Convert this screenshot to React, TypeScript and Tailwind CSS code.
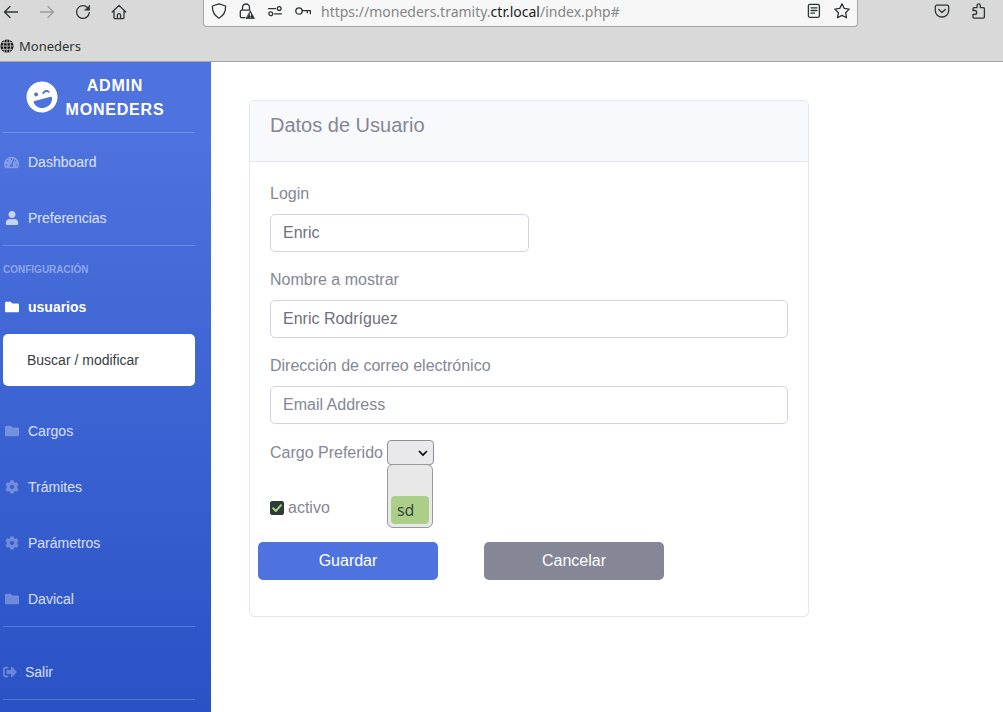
import React from "react";
import {
  FaCog,
  FaFolder,
  FaLaughWink,
  FaSignOutAlt,
  FaTachometerAlt,
  FaUser,
} from "react-icons/fa";

type GlyphProps = { children: React.ReactNode; className?: string };

function Glyph({ children, className = "text-[#2e3436]" }: GlyphProps) {
  return (
    <svg
      viewBox="0 0 16 16"
      className={`size-4 shrink-0 ${className}`}
      fill="none"
      stroke="currentColor"
      strokeWidth="1.3"
      strokeLinecap="round"
      strokeLinejoin="round"
      aria-hidden="true"
    >
      {children}
    </svg>
  );
}

function BrowserChrome() {
  return (
    <header className="flex h-[62px] flex-col border-b border-[#a6a6a6] bg-[#d9d9d9] font-['Noto_Sans',sans-serif]">
      <div className="flex h-[27px] items-start">
        <div className="flex w-[203px] shrink-0 gap-5 pt-1 pl-[3px]">
          <button aria-label="Atrás">
            <Glyph>
              <path d="M14.5 8H1.5M7 2.5 1.5 8 7 13.5" />
            </Glyph>
          </button>
          <button aria-label="Adelante">
            <Glyph className="text-[#9c9c9c]">
              <path d="M1.5 8h13M9 2.5 14.5 8 9 13.5" />
            </Glyph>
          </button>
          <button aria-label="Recargar">
            <Glyph>
              <path d="M14.3 8.6A6.4 6.4 0 1 1 12.6 3.6" />
              <path d="M14.6 1.4v4.8H9.8z" fill="currentColor" strokeWidth="0.6" />
            </Glyph>
          </button>
          <button aria-label="Inicio">
            <Glyph>
              <path d="M1.2 8 8 1.4 14.8 8M3 6.6v7.2c0 .5.3.8.8.8h8.4c.5 0 .8-.3.8-.8V6.600M6.400 14.400v-3.200a1.600 1.600 0 0 1 3.200 0v3.200" />
            </Glyph>
          </button>
        </div>
        <div className="flex h-[27px] flex-1 items-start rounded-b-sm border border-t-0 border-[#a6a6a6] bg-[#f7f7f7] px-[7px] pt-[3px]">
          <div className="flex w-[110px] shrink-0 gap-3">
            <Glyph>
              <path d="M8 .8 14.600 3c.2 5.200-1.300 9.200-6.600 12.200C2.700 12.200 1.200 8.200 1.400 3z" />
            </Glyph>
            <Glyph>
              <path d="M3.500 7.200V4.500a3.500 3.500 0 0 1 7 0v2.700M6 14.600H2.800c-.9 0-1.500-.6-1.500-1.500V8.700c0-.9.6-1.500 1.500-1.500h8" />
              <path d="M11.400 8.200 15.400 15.600H7.400z" fill="currentColor" strokeWidth="0.8" />
              <path d="M11.400 10.500v2.200M11.400 14.200v.1" stroke="#f7f7f7" strokeWidth="1" />
            </Glyph>
            <Glyph>
              <path d="M1.500 5.600h7M7.500 10.800h7" />
              <circle cx="12.200" cy="5.600" r="1.900" />
              <circle cx="3.800" cy="10.800" r="1.900" />
            </Glyph>
            <Glyph>
              <circle cx="4" cy="8" r="3.200" />
              <path d="M7.200 7.600h8.200v3M12.300 7.600v2.200" />
            </Glyph>
          </div>
          <div className="flex-1 text-sm leading-[18px] text-[#858585]">
            https://moneders.tramity.<span className="text-[#222]">ctr.local</span>/index.php#
          </div>
          <div className="flex gap-3">
            <button aria-label="Vista de lectura">
              <Glyph>
                <rect x="2.400" y="1.300" width="11" height="13" rx="1.600" />
                <path d="M5 4.800h6M5 7.500h6M5 10.200h3.500" />
              </Glyph>
            </button>
            <button aria-label="Marcador">
              <Glyph>
                <path d="m8 .8 2.200 4.600 5 .7-3.600 3.600.9 5.100L8 12.400l-4.500 2.400.9-5.100L.8 6.100l5-.7z" />
              </Glyph>
            </button>
          </div>
        </div>
        <div className="flex w-[145px] shrink-0 justify-end gap-5 pt-[3px] pr-[17px]">
          <button aria-label="Pocket">
            <Glyph>
              <path d="M2.800 2.200h10.400c.9 0 1.500.6 1.500 1.500v4.100a6.700 6.200 0 0 1-13.400 0V3.700c0-.9.6-1.500 1.500-1.500zM4.800 6.500l3.200 3 3.200-3" />
            </Glyph>
          </button>
          <button aria-label="Extensiones">
            <Glyph>
              <path d="M3 7.500V5.700c0-.7.400-1.100 1.100-1.100h3V2.400a1.600 1.600 0 0 1 3.200 0v2.200h3c.7 0 1.100.4 1.100 1.100v8.300c0 .7-.4 1.100-1.100 1.100H4.100c-.7 0-1.100-.4-1.100-1.100v-2.700h1.800a1.900 1.900 0 0 0 0-3.800z" />
            </Glyph>
          </button>
        </div>
      </div>
      <nav className="flex flex-1 items-center">
        <a href="#" className="flex items-center gap-[5px] pt-1 text-[13px] leading-5 text-[#2e3436]">
          <svg viewBox="0 0 14 14" className="size-3.5" aria-hidden="true">
            <circle cx="7" cy="7" r="6.600" fill="#111" />
            <path
              d="M7 .5v13M.5 7h13M1.500 3.700h11M1.500 10.300h11M4.500 1Q2 7 4.500 13M9.500 1Q12 7 9.500 13"
              fill="none"
              stroke="#d9d9d9"
              strokeWidth="0.8"
            />
          </svg>
          Moneders
        </a>
      </nav>
    </header>
  );
}

type NavItemProps = {
  icon: React.ReactNode;
  label: string;
  active?: boolean;
};

function NavItem({ icon, label, active }: NavItemProps) {
  return (
    <a
      href="#"
      className={`flex h-14 items-center gap-2 pt-0.5 text-sm ${
        active ? "font-bold text-white" : "text-white/80"
      }`}
    >
      <span className="flex w-[17px] justify-center">{icon}</span>
      {label}
    </a>
  );
}

const Divider = () => <hr className="border-white/20" />;

function Sidebar() {
  return (
    <aside className="w-[211px] shrink-0 bg-linear-to-b from-[#4e73df] from-10% to-[#2a52c5] pr-4 pl-[3px]">
      <a
        href="#"
        className="flex h-[70px] items-center justify-center gap-2 pr-2 text-center text-base leading-6 font-bold tracking-wider text-white uppercase"
      >
        <FaLaughWink className="size-8 shrink-0 -rotate-15" />
        <span className="pt-0.5">
          Admin
          <br />
          Moneders
        </span>
      </a>
      <Divider />
      <NavItem icon={<FaTachometerAlt className="size-[15px] text-white/30" />} label="Dashboard" />
      <NavItem icon={<FaUser className="size-3.5 text-white/70" />} label="Preferencias" />
      <Divider />
      <h2 className="pt-4 text-[10px] leading-4 font-bold text-white/40 uppercase">Configuración</h2>
      <NavItem icon={<FaFolder className="size-3.5" />} label="usuarios" active />
      <div className="mb-4 rounded-[5px] bg-white px-6 py-4">
        <a href="#" className="block text-sm text-[#3a3b45]">
          Buscar / modificar
        </a>
      </div>
      <NavItem icon={<FaFolder className="size-3.5 text-white/30" />} label="Cargos" />
      <NavItem icon={<FaCog className="size-3.5 text-white/30" />} label="Trámites" />
      <NavItem icon={<FaCog className="size-3.5 text-white/30" />} label="Parámetros" />
      <NavItem icon={<FaFolder className="size-3.5 text-white/30" />} label="Davical" />
      <Divider />
      <a href="#" className="mt-4 flex h-14 items-center gap-2 pt-0.5 text-sm text-white/80">
        <FaSignOutAlt className="size-3.5 text-white/30" />
        Salir
      </a>
      <Divider />
    </aside>
  );
}

type FieldProps = {
  id: string;
  label: string;
  value?: string;
  placeholder?: string;
  width?: string;
  type?: string;
};

function Field({ id, label, value, placeholder, width = "w-full", type = "text" }: FieldProps) {
  return (
    <div className="mb-4">
      <label htmlFor={id} className="mb-2 block">
        {label}
      </label>
      <input
        id={id}
        type={type}
        defaultValue={value}
        placeholder={placeholder}
        className={`block h-[38px] rounded-[5px] border border-[#d1d3e2] bg-white px-3 text-[#6e707e] placeholder:text-[#858796] ${width}`}
      />
    </div>
  );
}

function UserForm() {
  return (
    <section className="max-w-[560px] rounded-[5px] border border-[#e3e6f0] bg-white">
      <div className="rounded-t-[5px] border-b border-[#e3e6f0] bg-[#f8f9fc] px-5 pt-3 pb-6">
        <h1 className="text-xl leading-6">Datos de Usuario</h1>
      </div>
      <form className="px-5 pt-5 pb-9">
        <Field id="login" label="Login" value="Enric" width="w-1/2" />
        <Field id="nombre" label="Nombre a mostrar" value="Enric Rodríguez" />
        <Field
          id="email"
          type="email"
          label="Dirección de correo electrónico"
          placeholder="Email Address"
        />
        <div className="mb-[31px] flex items-center gap-1">
          <label htmlFor="cargo">Cargo Preferido</label>
          <div className="relative grid items-center">
            <select
              id="cargo"
              className="col-start-1 row-start-1 h-[25px] w-[47px] appearance-none rounded-[4px] border border-[#8f8f9d] bg-[#e9e9ed] text-black"
            >
              <option value=""></option>
              <option value="sd">sd</option>
            </select>
            <svg
              viewBox="0 0 10 10"
              className="pointer-events-none col-start-1 row-start-1 mr-1.5 size-2.5 justify-self-end"
              fill="none"
              stroke="#000"
              strokeWidth="1.600"
              aria-hidden="true"
            >
              <path d="M1 3l4 4 4-4" />
            </svg>
            <div
              role="listbox"
              aria-label="Cargo Preferido"
              className="absolute top-full left-0 -mt-px w-[46px] rounded-md border border-[#999] bg-[#e8e8e8] p-[3px] font-['Noto_Sans',sans-serif] text-[#3a4a3a]"
            >
              <div role="option" aria-selected="false" className="h-7" />
              <div role="option" aria-selected="true" className="h-7 rounded-[4px] bg-[#abcf88] px-1.5 leading-7">
                sd
              </div>
            </div>
          </div>
        </div>
        <div className="mb-[22px] flex items-center gap-1">
          <span className="grid">
            <input
              id="activo"
              type="checkbox"
              defaultChecked
              className="peer col-start-1 row-start-1 size-3.5 appearance-none rounded-[2px] border border-[#2f3b36] checked:bg-[#2f3b36]"
            />
            <svg
              viewBox="0 0 14 14"
              className="pointer-events-none invisible col-start-1 row-start-1 size-3.5 peer-checked:visible"
              fill="none"
              stroke="#a5d287"
              strokeWidth="2"
              strokeLinecap="round"
              strokeLinejoin="round"
              aria-hidden="true"
            >
              <path d="M3.200 7.300 5.800 10l5.200-5.800" />
            </svg>
          </span>
          <label htmlFor="activo">activo</label>
        </div>
        <div className="-mx-3 flex gap-[46px] text-white">
          <button type="submit" className="h-[38px] w-[180px] rounded-[5px] bg-[#4e73df]">
            Guardar
          </button>
          <button type="button" className="h-[38px] w-[180px] rounded-[5px] bg-[#858796]">
            Cancelar
          </button>
        </div>
      </form>
    </section>
  );
}

export default function App() {
  return (
    <div className="flex min-h-screen flex-col bg-white font-['Liberation_Sans',Arial,sans-serif] text-base leading-6 text-[#858796]">
      <BrowserChrome />
      <div className="flex flex-1">
        <Sidebar />
        <main className="min-w-0 flex-1 p-[38px]">
          <UserForm />
        </main>
      </div>
    </div>
  );
}
